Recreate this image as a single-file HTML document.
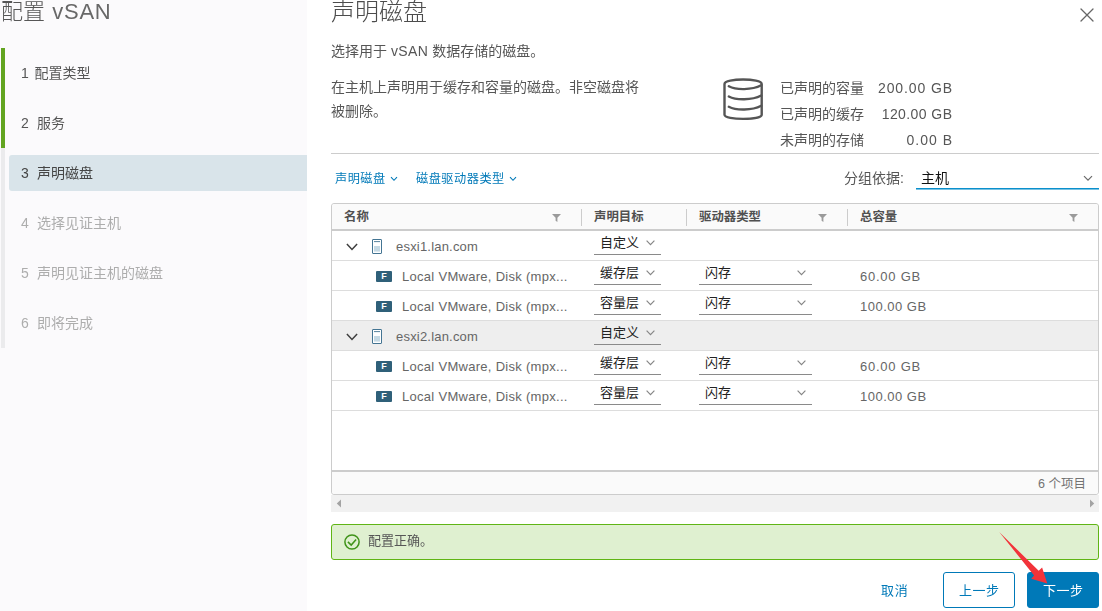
<!DOCTYPE html>
<html lang="zh-CN">
<head>
<meta charset="utf-8">
<title>配置 vSAN</title>
<style>
*{box-sizing:border-box;margin:0;padding:0}
html,body{width:1102px;height:611px;overflow:hidden;background:#fff}
body{position:relative;font-family:"Liberation Sans","Noto Sans CJK SC",sans-serif;font-size:14px;color:#565656}
.abs{position:absolute;white-space:nowrap}
#side,#main{will-change:opacity}
#side{position:absolute;left:0;top:0;width:307px;height:611px;background:#fbfafc}
#side h1{position:absolute;left:1px;top:-4px;font-size:22px;font-weight:300;color:#565656;line-height:32px;letter-spacing:0}
#side h1 span{color:#686868;letter-spacing:.7px;margin-left:1.2px}
.bar{position:absolute;left:1px;width:4px}
.step{position:absolute;left:9px;width:298px;height:36px;line-height:36px;padding-left:12px;font-size:14px;color:#565656;white-space:nowrap}
.step .n{display:inline-block;width:16px}
.step.dis{color:#adadad}
.step.cur{background:#d9e4ea;border-radius:3px 0 0 3px;color:#454545}
#main h2{position:absolute;left:331px;top:-6px;font-size:24px;font-weight:300;color:#4c4c4c;line-height:36px}
.p{position:absolute;left:331px;font-size:14px;line-height:24px;color:#565656;white-space:nowrap}
.hr{position:absolute;left:331px;width:768px;height:1px;background:#ccc;top:153px}
.lbl{position:absolute;left:780px;font-size:14px;line-height:20px;color:#565656;white-space:nowrap}
.val{position:absolute;right:150px;font-size:14px;line-height:20px;color:#565656;white-space:nowrap;text-align:right;letter-spacing:.88px;margin-right:-.88px}
.lnk{position:absolute;top:168.5px;font-size:12.2px;letter-spacing:.5px;line-height:20px;color:#0079b8;white-space:nowrap}
.chev{display:inline-block;vertical-align:middle}
#grid{position:absolute;left:331px;top:203px;width:768px;height:292px;border:1px solid #ccc;border-radius:3px;background:#fff}
#ghead{position:absolute;left:0;top:0;width:766px;height:27px;border-radius:3px 3px 0 0;background:#fafafa;border-bottom:2px solid #ccc}
.th{position:absolute;top:2px;height:24px;line-height:23px;font-size:12.4px;font-weight:bold;color:#505050;white-space:nowrap}
.sep{position:absolute;top:5px;width:1px;height:17px;background:#ccc}
.flt{position:absolute;top:10px}
.row{position:absolute;left:0;width:766px;height:30px;border-bottom:1px solid #ddd;font-size:13px;color:#666}
.row.g{background:#eeeeee}
.cell{position:absolute;top:1px;height:30px;line-height:30px;white-space:nowrap}
.sel{position:absolute;top:0;height:24px;border-bottom:1px solid #8a8a8a;font-size:13px;color:#222;line-height:24px;white-space:nowrap}
.ficon{width:16px;height:11px;background:#2f6079;color:#fff;font-size:9px;font-weight:bold;line-height:11px;text-align:center;border-radius:1px}
.host{letter-spacing:.2px}.disk{letter-spacing:.29px}.cap{letter-spacing:.75px}
#gfoot{position:absolute;left:0;top:266px;width:766px;height:24px;border-top:2px solid #ccc;background:#fafafa;font-size:12.5px;line-height:24px;color:#737373;border-radius:0 0 3px 3px;text-align:right;padding-right:12px}
#hscroll{position:absolute;left:331px;top:495px;width:768px;height:16.5px;background:#f1f1f1}
#alert{position:absolute;left:331px;top:524px;width:768px;height:36px;background:#dff0d0;border:1px solid #60b515;border-radius:3px}
.btn{position:absolute;top:572px;height:36px;border-radius:3px;font-size:13px;line-height:35px;letter-spacing:.6px;padding-left:.6px;text-align:center;white-space:nowrap}
</style>
</head>
<body>
<div id="side">
  <h1>配置 <span>vSAN</span></h1>
  <div class="bar" style="top:48px;height:100px;background:#62a420"></div>
  <div class="bar" style="top:148px;height:200px;background:#ebebed"></div>
  <div class="step" style="top:55px"><span class="n" style="width:13.4px">1</span>配置类型</div>
  <div class="step" style="top:105px"><span class="n">2</span>服务</div>
  <div class="step cur" style="top:155px"><span class="n">3</span>声明磁盘</div>
  <div class="step dis" style="top:205px"><span class="n">4</span>选择见证主机</div>
  <div class="step dis" style="top:255px"><span class="n">5</span>声明见证主机的磁盘</div>
  <div class="step dis" style="top:305px"><span class="n">6</span>即将完成</div>
</div>
<div id="main">
  <h2>声明磁盘</h2>
  <svg class="abs" style="left:1080px;top:8px" width="14" height="14" viewBox="0 0 14 14"><path d="M1 1 L13 13 M13 1 L1 13" stroke="#666" stroke-width="1.3" fill="none" stroke-linecap="round"/></svg>
  <div class="p" style="top:39px">选择用于 <span style="letter-spacing:.4px">vSAN</span> 数据存储的磁盘。</div>
  <div class="p" style="top:75px">在主机上声明用于缓存和容量的磁盘。非空磁盘将<br>被删除。</div>

  <svg class="abs" style="left:721px;top:76px" width="44" height="46" viewBox="0 0 44 46">
    <g fill="none" stroke="#555" stroke-width="2.4" stroke-linecap="round" stroke-linejoin="round">
      <path d="M3.5 8 C3.5 2 40.7 2 40.7 8 L40.7 38.8 C40.7 44.2 3.5 44.2 3.5 38.8 Z"/>
      <path d="M7.8 10.3 C15 14.2 31 14.2 40.2 9.3"/>
      <path d="M7.8 20.5 C15 24.4 31 24.4 40.2 19.5"/>
      <path d="M7.8 30.7 C15 34.6 31 34.6 40.2 29.7"/>
    </g>
  </svg>
  <div class="lbl" style="top:78px">已声明的容量</div><div class="val" style="top:78px">200.00 GB</div>
  <div class="lbl" style="top:104px">已声明的缓存</div><div class="val" style="top:104px;letter-spacing:.42px;margin-right:-.42px">120.00 GB</div>
  <div class="lbl" style="top:130px">未声明的存储</div><div class="val" style="top:130px;letter-spacing:1px;margin-right:-1px">0.00 B</div>
  <div class="hr"></div>

  <div class="lnk" style="left:335px">声明磁盘 <svg class="chev" width="8" height="6" viewBox="0 0 8 6"><path d="M1 1.2 L4 4.3 L7 1.2" stroke="#0079b8" stroke-width="1.1" fill="none"/></svg></div>
  <div class="lnk" style="left:416px">磁盘驱动器类型 <svg class="chev" width="8" height="6" viewBox="0 0 8 6"><path d="M1 1.2 L4 4.3 L7 1.2" stroke="#0079b8" stroke-width="1.1" fill="none"/></svg></div>
  <div class="abs" style="left:844px;top:168px;font-size:14px;line-height:20px;color:#565656">分组依据:</div>
  <div class="abs" style="left:916px;top:166px;width:183px;height:23px;border-bottom:1px solid #0a8fcc;box-shadow:0 1px 0 rgba(10,143,204,.55);font-size:14px;line-height:24px;color:#111;padding-left:5px">主机</div>
  <svg class="abs" style="left:1083px;top:175px" width="10" height="7" viewBox="0 0 10 7"><path d="M1 1.2 L5 5.2 L9 1.2" stroke="#6a6a6a" stroke-width="1.2" fill="none"/></svg>

  <div id="grid">
    <div id="ghead">
      <div class="th" style="left:12px">名称</div>
      <div class="th" style="left:262px">声明目标</div>
      <div class="th" style="left:367px">驱动器类型</div>
      <div class="th" style="left:528px">总容量</div>
      <div class="sep" style="left:249px"></div>
      <div class="sep" style="left:354px"></div>
      <div class="sep" style="left:515px"></div>
      <svg class="flt" style="left:220px" width="9" height="8" viewBox="0 0 9 8"><path d="M0 0 H9 L5.4 3.8 V8 L3.6 6.8 V3.8 Z" fill="#9a9a9a"/></svg><svg class="flt" style="left:486px" width="9" height="8" viewBox="0 0 9 8"><path d="M0 0 H9 L5.4 3.8 V8 L3.6 6.8 V3.8 Z" fill="#9a9a9a"/></svg><svg class="flt" style="left:737px" width="9" height="8" viewBox="0 0 9 8"><path d="M0 0 H9 L5.4 3.8 V8 L3.6 6.8 V3.8 Z" fill="#9a9a9a"/></svg>
    </div>
      <div class="row" style="top:27px"><svg class="abs" style="left:14px;top:12px" width="12" height="8" viewBox="0 0 12 8"><path d="M0.9 1 L6 6.4 L11.1 1" stroke="#3e3e3e" stroke-width="1.5" fill="none"/></svg><svg class="abs" style="left:40px;top:8px" width="10" height="15" viewBox="0 0 10 15"><rect x="0.5" y="0.5" width="9" height="14" rx="0.4" fill="#fff" stroke="#447593" stroke-width="1"/><rect x="2" y="7" width="6" height="5.6" fill="#c5d9e4"/><path d="M2 2.6 H8" stroke="#447593" stroke-width="0.9"/></svg><div class="cell host" style="left:64px">esxi1.lan.com</div><div class="sel" style="left:262px;width:67px;padding-left:6px">自定义<svg class="abs" style="left:51.6px;top:9px" width="9" height="6" viewBox="0 0 9 6"><path d="M0.6 0.6 L4.5 4.6 L8.4 0.6" stroke="#858585" stroke-width="1.15" fill="none"/></svg></div></div>
      <div class="row" style="top:57px"><div class="abs ficon" style="left:44px;top:10px">F</div><div class="cell disk" style="left:70px">Local VMware, Disk (mpx...</div><div class="sel" style="left:262px;width:67px;padding-left:6px">缓存层<svg class="abs" style="left:51.6px;top:9px" width="9" height="6" viewBox="0 0 9 6"><path d="M0.6 0.6 L4.5 4.6 L8.4 0.6" stroke="#858585" stroke-width="1.15" fill="none"/></svg></div><div class="sel" style="left:367px;width:113px;padding-left:6px">闪存<svg class="abs" style="left:97.6px;top:9px" width="9" height="6" viewBox="0 0 9 6"><path d="M0.6 0.6 L4.5 4.6 L8.4 0.6" stroke="#858585" stroke-width="1.15" fill="none"/></svg></div><div class="cell cap" style="left:528px">60.00 GB</div></div>
      <div class="row" style="top:87px"><div class="abs ficon" style="left:44px;top:10px">F</div><div class="cell disk" style="left:70px">Local VMware, Disk (mpx...</div><div class="sel" style="left:262px;width:67px;padding-left:6px">容量层<svg class="abs" style="left:51.6px;top:9px" width="9" height="6" viewBox="0 0 9 6"><path d="M0.6 0.6 L4.5 4.6 L8.4 0.6" stroke="#858585" stroke-width="1.15" fill="none"/></svg></div><div class="sel" style="left:367px;width:113px;padding-left:6px">闪存<svg class="abs" style="left:97.6px;top:9px" width="9" height="6" viewBox="0 0 9 6"><path d="M0.6 0.6 L4.5 4.6 L8.4 0.6" stroke="#858585" stroke-width="1.15" fill="none"/></svg></div><div class="cell cap" style="left:528px;letter-spacing:.5px">100.00 GB</div></div>
      <div class="row g" style="top:117px"><svg class="abs" style="left:14px;top:12px" width="12" height="8" viewBox="0 0 12 8"><path d="M0.9 1 L6 6.4 L11.1 1" stroke="#3e3e3e" stroke-width="1.5" fill="none"/></svg><svg class="abs" style="left:40px;top:8px" width="10" height="15" viewBox="0 0 10 15"><rect x="0.5" y="0.5" width="9" height="14" rx="0.4" fill="#fff" stroke="#447593" stroke-width="1"/><rect x="2" y="7" width="6" height="5.6" fill="#c5d9e4"/><path d="M2 2.6 H8" stroke="#447593" stroke-width="0.9"/></svg><div class="cell host" style="left:64px">esxi2.lan.com</div><div class="sel" style="left:262px;width:67px;padding-left:6px">自定义<svg class="abs" style="left:51.6px;top:9px" width="9" height="6" viewBox="0 0 9 6"><path d="M0.6 0.6 L4.5 4.6 L8.4 0.6" stroke="#858585" stroke-width="1.15" fill="none"/></svg></div></div>
      <div class="row" style="top:147px"><div class="abs ficon" style="left:44px;top:10px">F</div><div class="cell disk" style="left:70px">Local VMware, Disk (mpx...</div><div class="sel" style="left:262px;width:67px;padding-left:6px">缓存层<svg class="abs" style="left:51.6px;top:9px" width="9" height="6" viewBox="0 0 9 6"><path d="M0.6 0.6 L4.5 4.6 L8.4 0.6" stroke="#858585" stroke-width="1.15" fill="none"/></svg></div><div class="sel" style="left:367px;width:113px;padding-left:6px">闪存<svg class="abs" style="left:97.6px;top:9px" width="9" height="6" viewBox="0 0 9 6"><path d="M0.6 0.6 L4.5 4.6 L8.4 0.6" stroke="#858585" stroke-width="1.15" fill="none"/></svg></div><div class="cell cap" style="left:528px">60.00 GB</div></div>
      <div class="row" style="top:177px"><div class="abs ficon" style="left:44px;top:10px">F</div><div class="cell disk" style="left:70px">Local VMware, Disk (mpx...</div><div class="sel" style="left:262px;width:67px;padding-left:6px">容量层<svg class="abs" style="left:51.6px;top:9px" width="9" height="6" viewBox="0 0 9 6"><path d="M0.6 0.6 L4.5 4.6 L8.4 0.6" stroke="#858585" stroke-width="1.15" fill="none"/></svg></div><div class="sel" style="left:367px;width:113px;padding-left:6px">闪存<svg class="abs" style="left:97.6px;top:9px" width="9" height="6" viewBox="0 0 9 6"><path d="M0.6 0.6 L4.5 4.6 L8.4 0.6" stroke="#858585" stroke-width="1.15" fill="none"/></svg></div><div class="cell cap" style="left:528px;letter-spacing:.5px">100.00 GB</div></div>
    <div id="gfoot">6 个项目</div>
  </div>
  <div id="hscroll"><svg class="abs" style="left:5px;top:4px" width="6" height="9" viewBox="0 0 6 9"><path d="M5 0.5 V8.5 L0.8 4.5 Z" fill="#a3a3a3"/></svg><svg class="abs" style="left:758px;top:4px" width="6" height="9" viewBox="0 0 6 9"><path d="M1 0.5 V8.5 L5.2 4.5 Z" fill="#a3a3a3"/></svg></div>
  <div id="alert"><svg class="abs" style="left:10.9px;top:7.9px" width="18" height="18" viewBox="0 0 18 18"><circle cx="9" cy="9" r="7.1" fill="none" stroke="#3f9318" stroke-width="1.5"/><path d="M4.9 8.9 L8.2 12.1 L13.1 6.6" fill="none" stroke="#3f9318" stroke-width="1.5"/></svg><div class="abs" style="left:36px;top:6px;font-size:13px;line-height:20px;color:#565656">配置正确。</div></div>
  <div class="abs" style="left:881px;top:580.5px;font-size:13px;line-height:20px;color:#0079b8;letter-spacing:.7px">取消</div>
  <div class="btn" style="left:943px;width:72px;border:1px solid #0079b8;color:#0079b8;background:#fff">上一步</div>
  <div class="btn" style="left:1027px;width:72px;background:#0079b8;color:#fff;border:1px solid #0079b8">下一步</div>
  <svg class="abs" style="left:990px;top:525px" width="70" height="70" viewBox="990 525 70 70"><polygon points="999.2,532.1 1038.7,570.8 1042.1,567.6 1047.3,583.4 1031.2,578.8 1034.1,575.4" fill="#f2333a"/></svg>
</div>
</body>
</html>
